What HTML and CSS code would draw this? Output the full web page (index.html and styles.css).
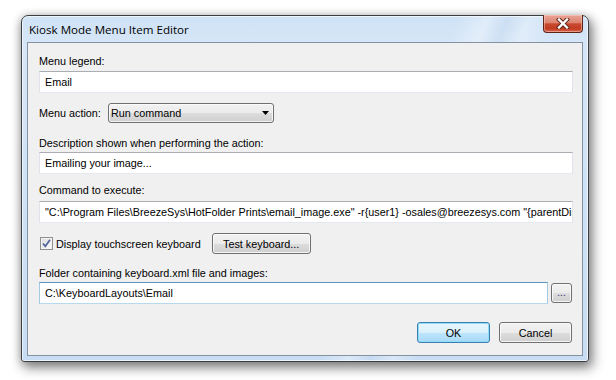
FILE: index.html
```html
<!DOCTYPE html>
<html>
<head>
<meta charset="utf-8">
<title>Kiosk Mode Menu Item Editor</title>
<link rel="stylesheet" href="styles.css">
</head>
<body>
<div class="window">
  <div class="titlebar">
    <span class="title">Kiosk Mode Menu Item Editor</span>
    <button class="close" type="button" aria-label="Close">
      <svg width="14" height="11" viewBox="0 0 14 11">
        <path d="M3 1.5 L11 9.5 M11 1.5 L3 9.5" stroke="#5a2418" stroke-width="4.2" stroke-linecap="square" fill="none"/>
        <path d="M3 1.5 L11 9.5 M11 1.5 L3 9.5" stroke="#ffffff" stroke-width="2.4" stroke-linecap="square" fill="none"/>
      </svg>
    </button>
  </div>
  <div class="client">
    <div class="lbl">Menu legend:</div>
    <input class="field field-legend" type="text" value="Email" readonly>

    <div class="row row-action">
      <span class="lbl-inline">Menu action:</span>
      <div class="combo">
        <span class="combo-text">Run command</span>
        <svg class="combo-arrow" width="7" height="4" viewBox="0 0 7 4"><path d="M0 0 H7 L3.5 4 Z" fill="#000"/></svg>
      </div>
    </div>

    <div class="lbl lbl-desc">Description shown when performing the action:</div>
    <input class="field field-desc" type="text" value="Emailing your image..." readonly>

    <div class="lbl lbl-cmd">Command to execute:</div>
    <input class="field field-cmd" type="text" value="&quot;C:\Program Files\BreezeSys\HotFolder Prints\email_image.exe&quot; -r{user1} -osales@breezesys.com &quot;{parentDir}\{filename}&quot;" readonly>

    <div class="row row-kb">
      <span class="check">
        <svg width="11" height="11" viewBox="0 0 11 11"><path d="M2 5.5 L4.3 8.3 L9 1.8" stroke="#51649c" stroke-width="1.7" fill="none"/></svg>
      </span>
      <span class="check-label">Display touchscreen keyboard</span>
      <button class="btn btn-test" type="button">Test keyboard...</button>
    </div>

    <div class="lbl lbl-folder">Folder containing keyboard.xml file and images:</div>
    <div class="row row-folder">
      <input class="field field-folder" type="text" value="C:\KeyboardLayouts\Email" readonly>
      <button class="btn btn-browse" type="button">...</button>
    </div>

    <div class="row row-buttons">
      <button class="btn btn-default" type="button">OK</button>
      <button class="btn" type="button">Cancel</button>
    </div>
  </div>
</div>
</body>
</html>
```
FILE: styles.css
```css
html, body {
  margin: 0;
  padding: 0;
  background: #ffffff;
}
body {
  width: 616px;
  height: 380px;
  overflow: hidden;
  font-family: "Liberation Sans", Arial, sans-serif;
  font-size: 10.8px;
  color: #000;
}

/* window frame */
.window {
  margin: 15px 0 0 21px;
  width: 568px;
  height: 347px;
  box-sizing: border-box;
  border: 1px solid #3b3f44;
  border-radius: 7px 7px 3px 3px;
  padding: 0 5px 5px 5px;
  display: flex;
  flex-direction: column;
  background:
    linear-gradient(112deg, rgba(255,255,255,0) 62%, rgba(255,255,255,0.35) 66%, rgba(190,210,235,0.25) 69%, rgba(255,255,255,0.3) 72%, rgba(255,255,255,0) 76%),
    linear-gradient(180deg, #cfe2f6 0%, #d6e6f7 8%, #c8ddf3 100%);
  box-shadow:
    inset 0 0 0 1px rgba(255,255,255,0.65),
    3px 5px 12px 1px rgba(0,0,0,0.45),
    -1px 1px 8px rgba(0,0,0,0.2);
}

.titlebar {
  height: 26px;
  display: flex;
  align-items: center;
  flex: none;
}
.title {
  margin-left: 2px;
  font-family: "Open Sans", "Liberation Sans", sans-serif;
  font-size: 11.6px;
  color: #000;
}
.close {
  margin-left: auto;
  align-self: flex-start;
  margin-top: -1px;
  width: 40px;
  height: 18px;
  padding: 0;
  border: 1px solid #5e2418;
  border-top: none;
  border-radius: 0 0 4px 4px;
  background: linear-gradient(180deg, #e9a497 0%, #dd8470 45%, #c94a30 52%, #c23c22 80%, #d86a50 100%);
  box-shadow: inset 0 0 0 1px rgba(255,220,210,0.45);
  display: flex;
  align-items: center;
  justify-content: center;
}

/* client area */
.client {
  flex: 1;
  background: #f0f0f0;
  border: 1px solid #8592a2;
  padding: 11px 9px 0 11px;
  display: flex;
  flex-direction: column;
}

.lbl {
  line-height: 14px;
  white-space: nowrap;
}
.lbl-desc { margin-top: 13px; }
.lbl-cmd { margin-top: 9px; }
.lbl-folder { margin-top: 12px; }

.field {
  display: block;
  box-sizing: border-box;
  height: 22px;
  margin: 0;
  padding: 0 0 0 5px;
  font-family: inherit;
  font-size: inherit;
  color: #000;
  background: #fff;
  border: 1px solid #e2e3ea;
  border-top-color: #abadb3;
  border-bottom-color: #e3e9ef;
  border-left-color: #e2e3ea;
  outline: none;
  width: 100%;
}
.field-legend { margin-top: 3px; }
.field-desc { margin-top: 2px; }
.field-cmd { margin-top: 4px; }
.field-folder {
  flex: 1;
  width: auto;
  border-color: #a4c9e3;
  border-top-color: #5794bf;
  border-bottom-color: #b7d9ed;
}

.row {
  display: flex;
  align-items: center;
}
.row-action { margin-top: 10px; height: 20px; }
.lbl-inline { width: 69px; flex: none; }

.combo {
  box-sizing: border-box;
  width: 166px;
  height: 20px;
  border: 1px solid #707070;
  border-radius: 3px;
  background: linear-gradient(180deg, #f2f2f2 0%, #ebebeb 50%, #dddddd 51%, #cfcfcf 100%);
  box-shadow: inset 0 0 0 1px rgba(252,252,252,0.8);
  display: flex;
  align-items: center;
  padding: 0 4px 0 2px;
}
.combo-text { flex: 1; }
.combo-arrow { display: block; }

.row-kb { margin-top: 10px; height: 21px; }
.check {
  box-sizing: border-box;
  width: 13px;
  height: 13px;
  margin-left: 1px;
  border: 1px solid #8e8f8f;
  background: linear-gradient(135deg, #dcdcdc, #fbfbfb);
  display: flex;
  align-items: center;
  justify-content: center;
  box-shadow: inset 0 0 0 1px #f4f4f4;
}
.check svg { display: block; }
.check-label { margin-left: 3px; }

.btn {
  box-sizing: border-box;
  height: 21px;
  width: 73px;
  padding: 0;
  font-family: inherit;
  font-size: inherit;
  color: #000;
  border: 1px solid #707070;
  border-radius: 3px;
  background: linear-gradient(180deg, #f2f2f2 0%, #ebebeb 50%, #dddddd 51%, #cfcfcf 100%);
  box-shadow: inset 0 0 0 1px rgba(252,252,252,0.85);
}
.btn-test {
  width: 99px;
  margin-left: 11px;
}
.row-folder { margin-top: 2px; height: 22px; }
.btn-browse {
  width: 21px;
  height: 20px;
  margin-left: 3px;
  margin-right: 1px;
  font-size: 10px;
  line-height: 14px;
  color: #1b2a66;
}
.row-buttons {
  margin-top: 18px;
  justify-content: flex-end;
  gap: 9px;
  padding-right: 1px;
}
.btn-default {
  border-color: #3c7fb1;
  background: linear-gradient(180deg, #eaf6fd 0%, #d9f0fc 50%, #bee6fd 51%, #a7d9f5 100%);
  box-shadow: inset 0 0 0 1px #8edcf8;
}
```
